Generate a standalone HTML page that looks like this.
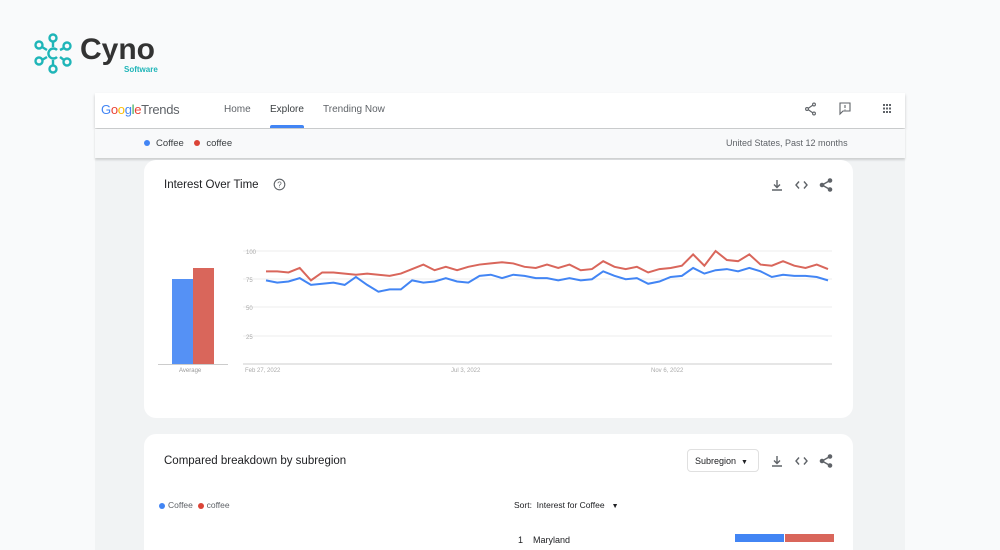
<!DOCTYPE html>
<html><head><meta charset="utf-8"><style>
*{margin:0;padding:0;box-sizing:border-box}
html,body{width:1000px;height:550px;overflow:hidden}
body{background:#f9fafb;font-family:"Liberation Sans",sans-serif;position:relative;color:#3c4043}
.abs{position:absolute}
.panel{left:95px;top:93px;width:810px;height:457px;background:#f1f3f4}
.hdr{left:95px;top:93px;width:810px;height:35px;background:#fff;box-shadow:0 2px 3px rgba(0,0,0,.2)}
.sub{left:95px;top:129px;width:810px;height:29px;background:#f8f9fa;box-shadow:0 2px 2px rgba(0,0,0,.15)}
.card{background:#fff;border-radius:12px}
.nav{font-size:10px;color:#5f6368;top:104px}
.dot{display:inline-block;width:6px;height:6px;border-radius:50%;vertical-align:middle;margin-right:6px}
</style></head><body>
<svg class="abs" style="left:34px;top:33px" width="50" height="42" viewBox="0 0 50 42" fill="none" stroke="#1fb5b8" stroke-width="2.4">
<circle cx="19" cy="5" r="3.5"/><circle cx="5" cy="12" r="3.5"/><circle cx="5" cy="28" r="3.5"/><circle cx="19" cy="36" r="3.5"/><circle cx="33" cy="13" r="3.5"/><circle cx="33" cy="29" r="3.5"/>
<path d="M19 9 V14 M8 14 L13 17 M8 27 L13 24 M19 32 V27 M30 15 L26 17 M30 27 L26 24"/>
<path d="M23 17 A5 5 0 1 0 23 24"/></svg>
<div class="abs" style="left:80px;top:33px;font-size:30px;font-weight:bold;color:#333;letter-spacing:0">Cyno</div>
<div class="abs" style="left:124px;top:65px;font-size:8px;color:#1fb5b8;font-weight:bold">Software</div>
<div class="abs panel"></div>
<div class="abs hdr"></div>
<div class="abs" style="left:101px;top:102px;font-size:13px;color:#5f6368;letter-spacing:-.3px"><span style="color:#4285f4">G</span><span style="color:#ea4335">o</span><span style="color:#fbbc05">o</span><span style="color:#4285f4">g</span><span style="color:#34a853">l</span><span style="color:#ea4335">e</span>Trends</div>
<div class="abs nav" style="left:224px">Home</div>
<div class="abs nav" style="left:270px;color:#3c4043">Explore</div>
<div class="abs" style="left:270px;top:125px;width:34px;height:3px;background:#4285f4;border-radius:2px 2px 0 0"></div>
<div class="abs nav" style="left:323px">Trending Now</div>
<svg class="abs" style="left:803px;top:101px" width="100" height="16" viewBox="0 0 100 16" fill="none" stroke="#5f6368" stroke-width="1.1">
<circle cx="11" cy="3.5" r="1.4"/><circle cx="4" cy="8" r="1.4"/><circle cx="11" cy="12.5" r="1.4"/><path d="M10 4 L5 7.5 M5 8.5 L10 12"/>
<path d="M37 2 H47 V10 H40 L37 13 Z"/><path d="M42 4 V7 M42 8.5 V9.2"/>
<g fill="#5f6368" stroke="none"><rect x="80" y="3" width="2" height="2"/><rect x="83" y="3" width="2" height="2"/><rect x="86" y="3" width="2" height="2"/><rect x="80" y="6.5" width="2" height="2"/><rect x="83" y="6.5" width="2" height="2"/><rect x="86" y="6.5" width="2" height="2"/><rect x="80" y="10" width="2" height="2"/><rect x="83" y="10" width="2" height="2"/><rect x="86" y="10" width="2" height="2"/></g></svg>
<div class="abs sub"></div>
<div class="abs" style="left:144px;top:138px;font-size:9.5px"><span class="dot" style="background:#4285f4"></span>Coffee &nbsp;&nbsp;&nbsp;<span class="dot" style="background:#db4437"></span>coffee</div>
<div class="abs" style="left:726px;top:138px;font-size:9px;color:#5f6368">United States, Past 12 months</div>

<div class="abs card" style="left:144px;top:160px;width:709px;height:258px"></div>
<div class="abs" style="left:164px;top:179px;font-size:11.5px;color:#202124">Interest Over Time</div>
<svg class="abs" style="left:273px;top:178px" width="13" height="13"><circle cx="6.5" cy="6.5" r="5.3" fill="none" stroke="#5f6368" stroke-width="1.1"/><text x="6.5" y="9.5" font-size="8" text-anchor="middle" fill="#5f6368" font-family="Liberation Sans">?</text></svg>
<svg class="abs" style="left:770px;top:178px" width="65" height="14" fill="none" stroke="#5f6368" stroke-width="1.4">
<path d="M7 2 V9 M4 6.5 L7 9.5 L10 6.5 M2 12 H12"/><path d="M29 3.5 L26 7 L29 10.5 M34 3.5 L37 7 L34 10.5"/>
<circle cx="60" cy="2.5" r="1.6" fill="#5f6368"/><circle cx="52" cy="7" r="1.6" fill="#5f6368"/><circle cx="60" cy="11.5" r="1.6" fill="#5f6368"/><path d="M60 2.5 L52 7 L60 11.5"/></svg>
<div class="abs" style="left:172px;top:279px;width:21px;height:86px;background:#4285f4;opacity:.9"></div>
<div class="abs" style="left:193px;top:268px;width:21px;height:97px;background:#d9665b"></div>
<div class="abs" style="left:158px;top:364px;width:70px;height:1px;background:#ccc"></div>
<div class="abs" style="left:179px;top:368px;font-size:6px;color:#999">Average</div>
<svg class="abs" style="left:0;top:0" width="1000" height="550">
<g stroke="#eee" stroke-width="1"><path d="M243 251H832M243 279H832M243 307H832M243 336H832"/></g>
<path d="M243 364H832" stroke="#ccc"/>
<g font-size="6" fill="#aaa" font-family="Liberation Sans"><text x="246" y="254">100</text><text x="246" y="282">75</text><text x="246" y="310">50</text><text x="246" y="339">25</text>
<text x="245" y="372">Feb 27, 2022</text><text x="451" y="372">Jul 3, 2022</text><text x="651" y="372">Nov 6, 2022</text></g>
<g transform="translate(266,364) scale(11.24,-1.13)" fill="none">
<polyline vector-effect="non-scaling-stroke" stroke-width="2" stroke="#d9665b" points="0,82 1,82 2,81 3,85 4,74 5,81 6,81 7,80 8,79 9,80 10,79 11,78 12,80 13,84 14,88 15,83 16,86 17,83 18,86 19,88 20,89 21,90 22,89 23,86 24,85 25,88 26,85 27,88 28,83 29,84 30,91 31,86 32,84 33,86 34,81 35,84 36,85 37,87 38,97 39,87 40,100 41,92 42,91 43,97 44,88 45,87 46,91 47,87 48,85 49,88 50,84"/>
<polyline vector-effect="non-scaling-stroke" stroke-width="2" stroke="#4285f4" points="0,74 1,72 2,73 3,76 4,70 5,71 6,72 7,70 8,77 9,70 10,64 11,66 12,66 13,74 14,72 15,73 16,76 17,73 18,72 19,78 20,79 21,76 22,79 23,78 24,76 25,76 26,74 27,76 28,74 29,75 30,82 31,78 32,75 33,76 34,71 35,73 36,77 37,78 38,85 39,80 40,83 41,84 42,82 43,85 44,82 45,77 46,79 47,78 48,78 49,77 50,74"/>
</g></svg>

<div class="abs card" style="left:144px;top:434px;width:709px;height:130px"></div>
<div class="abs" style="left:164px;top:455px;font-size:11.5px;color:#202124">Compared breakdown by subregion</div>
<div class="abs" style="left:687px;top:449px;width:72px;height:23px;border:1px solid #e0e0e0;border-radius:4px;font-size:9px;padding:6px 0 0 7px;color:#202124">Subregion &nbsp;<span style="font-size:7px">▼</span></div>
<svg class="abs" style="left:770px;top:454px" width="65" height="14" fill="none" stroke="#5f6368" stroke-width="1.4">
<path d="M7 2 V9 M4 6.5 L7 9.5 L10 6.5 M2 12 H12"/><path d="M29 3.5 L26 7 L29 10.5 M34 3.5 L37 7 L34 10.5"/>
<circle cx="60" cy="2.5" r="1.6" fill="#5f6368"/><circle cx="52" cy="7" r="1.6" fill="#5f6368"/><circle cx="60" cy="11.5" r="1.6" fill="#5f6368"/><path d="M60 2.5 L52 7 L60 11.5"/></svg>
<div class="abs" style="left:159px;top:500px;font-size:8.5px;color:#5f6368"><span class="dot" style="background:#4285f4;margin-right:3px"></span>Coffee &nbsp;<span class="dot" style="background:#db4437;margin-right:3px"></span>coffee</div>
<div class="abs" style="left:514px;top:500px;font-size:8.5px;color:#202124">Sort: &nbsp;Interest for Coffee &nbsp;&nbsp;<span style="font-size:7px">▼</span></div>
<div class="abs" style="left:518px;top:535px;font-size:9px;color:#202124">1 &nbsp;&nbsp;&nbsp;Maryland</div>
<div class="abs" style="left:735px;top:534px;width:49px;height:8px;background:#4285f4"></div>
<div class="abs" style="left:785px;top:534px;width:49px;height:8px;background:#d9665b"></div>
</body></html>
